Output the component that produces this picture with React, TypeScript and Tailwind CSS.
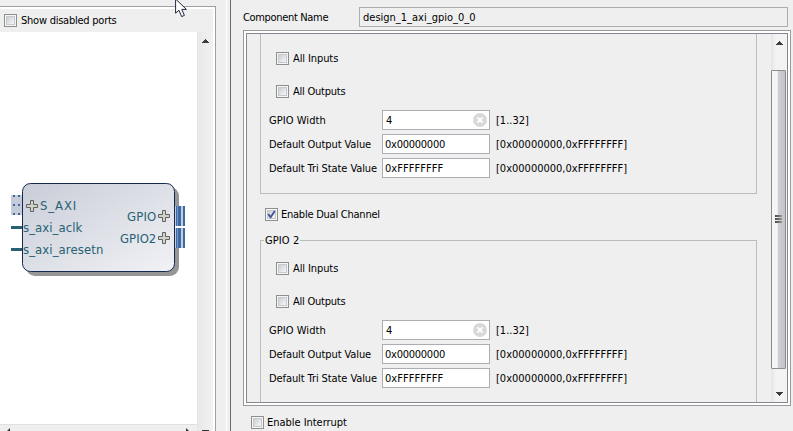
import React from "react";

function CheckBox({ label, checked = false, tight = false, spacing = "tracking-[-0.24px]" }: { label: string; checked?: boolean; tight?: boolean; spacing?: string }) {
  return (
    <label className={"flex h-[13px] items-center " + (tight ? "gap-[3px]" : "gap-[4px]")}>
      <span className="flex size-[13px] shrink-0 items-center justify-center border border-[#8e8f8f] bg-[#f6f6f6]">
        <span className="flex size-[9px] items-center justify-center border border-[#c4c9ce] bg-linear-to-br from-[#cbd0d6] to-[#f6f6f6]">
          {checked && (
            <svg width="9" height="9" viewBox="0 0 9 9" className="shrink-0">
              <path d="M1.2 4.2 3.6 7.2 7.8 1" fill="none" stroke="#42539a" strokeWidth="1.9" />
            </svg>
          )}
        </span>
      </span>
      <span className={"leading-[13px] " + spacing}>{label}</span>
    </label>
  );
}

function Field({ label, value, range, clear = false }: { label: string; value: string; range: string; clear?: boolean }) {
  return (
    <div className="flex h-[20px] items-center">
      <span className={"w-[113px] pt-[2px] " + (clear ? "tracking-[0.05px]" : "tracking-[-0.09px]")}>{label}</span>
      <span className={"flex h-[20px] w-[108px] items-center justify-between border border-[#abadb3] bg-white pr-[2px] " + (clear ? "pl-[3px]" : "pl-[2px]")}>
        <span className={"pt-[2px] " + (value.includes("F") ? "tracking-[0.05px]" : "tracking-[-0.25px]")}>{value}</span>
        {clear && (
          <svg width="14" height="14" viewBox="0 0 14 14">
            <circle cx="7" cy="7" r="7" fill="#d8d8d8" />
            <path d="M4.4 4.4 9.6 9.6M9.6 4.4 4.4 9.6" stroke="#fff" strokeWidth="1.9" />
          </svg>
        )}
      </span>
      <span className="pt-[2px] pl-[6px] tracking-[0px]">{range}</span>
    </div>
  );
}

function Channel() {
  return (
    <>
      <div className="flex flex-col gap-[20px] pl-[15px]">
        <CheckBox label="All Inputs" spacing="tracking-[-0.1px]" />
        <CheckBox label="All Outputs" />
      </div>
      <div className="mt-[12px] flex flex-col gap-[4px] pl-[8px]">
        <Field label="GPIO Width" value="4" range="[1..32]" clear />
        <Field label="Default Output Value" value="0x00000000" range="[0x00000000,0xFFFFFFFF]" />
        <Field label="Default Tri State Value" value="0xFFFFFFFF" range="[0x00000000,0xFFFFFFFF]" />
      </div>
    </>
  );
}

function Arrow({ down = false }: { down?: boolean }) {
  return (
    <svg width="7" height="4" viewBox="0 0 7 4" shapeRendering="crispEdges">
      <path d={down ? "M0 0H7L3.5 4Z" : "M0 4H7L3.5 0Z"} fill="#3c3c3c" />
    </svg>
  );
}

function Plus({ x, y }: { x: number; y: number }) {
  return (
    <path
      transform={`translate(${x} ${y})`}
      d="M4.5.5h3v4h4v3h-4v4h-3v-4h-4v-3h4z"
      fill="#d2d2cc"
      stroke="#62625c"
    />
  );
}

function Diagram() {
  return (
    <svg width="197" height="392" viewBox="0 32 197 392" className="block">
      <defs>
        <linearGradient id="block" x1="0" y1="0" x2="1" y2="1">
          <stop offset="0" stopColor="#c9cdd7" />
          <stop offset="1" stopColor="#f1f2f6" />
        </linearGradient>
      </defs>
      <rect x="26" y="187" width="153" height="89" rx="9" fill="#969696" />
      <rect x="11" y="195" width="11" height="20" fill="#c5cbd8" />
      <g fill="#3d69a6">
        {[195, 204, 213].map((y) => (
          <React.Fragment key={y}>
            <rect x="13" y={y} width="2" height="2" />
            <rect x="18" y={y} width="2" height="2" />
          </React.Fragment>
        ))}
      </g>
      <rect x="11" y="226" width="12" height="3" fill="#286174" />
      <rect x="11" y="248" width="12" height="3" fill="#286174" />
      <rect x="22.5" y="183.5" width="152" height="88" rx="8" fill="url(#block)" stroke="#15294f" />
      {[206, 228].map((y) => (
        <g key={y}>
          <rect x="175" y={y} width="10" height="20" fill="#3d69a6" />
          <rect x="175" y={y} width="1" height="20" fill="#c5cbd8" />
          <rect x="177" y={y} width="1" height="20" fill="#7798c6" />
          <rect x="181" y={y} width="2" height="20" fill="#c5cbd8" />
        </g>
      ))}
      <rect x="175" y="226" width="10" height="2" fill="#fff" />
      <Plus x={26} y={200} />
      <Plus x={158} y={210} />
      <Plus x={158} y={232} />
      <g fill="#286174" fontFamily="'DejaVu Sans Condensed','DejaVu Sans',sans-serif" fontSize="13">
        <text x="40" y="210" textLength="36">S_AXI</text>
        <text x="23" y="232" textLength="59">s_axi_aclk</text>
        <text x="23" y="254" textLength="80">s_axi_aresetn</text>
        <text x="127" y="221" textLength="29">GPIO</text>
        <text x="120" y="243" textLength="36">GPIO2</text>
      </g>
    </svg>
  );
}

export default function App() {
  return (
    <div className="relative flex h-[431px] w-[793px] overflow-hidden bg-[#efefef] font-['DejaVu_Sans_Condensed','DejaVu_Sans',sans-serif] text-[11px] tracking-[-0.3px] whitespace-nowrap text-black">
      <div className="flex w-[226px] flex-col pt-[6px]">
        <div className="flex w-[216px] grow flex-col border-t border-r border-[#a0a0a0]">
          <div className="flex grow flex-col border-t-2 border-r-2 border-white">
            <div className="flex h-[23px] items-center pb-[1px] pl-[4px]">
              <CheckBox label="Show disabled ports" />
            </div>
            <div className="flex grow">
              <div className="w-[197px] bg-white">
                <Diagram />
                <div className="flex h-[7px] justify-between border-t border-[#e0e0e0] bg-[#efefef] pt-[3px] pr-[7px] pl-[6px]">
                  <svg width="4" height="4"><path d="M4 0V4H0Z" fill="#333" /></svg>
                  <svg width="4" height="4"><path d="M0 0V4H4Z" fill="#333" /></svg>
                </div>
              </div>
              <div className="flex grow flex-col items-center justify-between border-l border-[#e6e6e6] bg-linear-to-r from-[#e9e9e9] to-[#f1f1f1] pt-[7px]">
                <Arrow />
                <span className="h-[1px] w-[7px] bg-[#333]" />
              </div>
            </div>
          </div>
        </div>
      </div>
      <div className="w-[4px] border-l border-white" />
      <div className="flex grow flex-col border-l border-[#6c6c6c] pt-[7px] pl-[12px]">
        <div className="flex h-[20px] items-center">
          <span className="w-[116px] pt-[2px] tracking-[-0.33px]">Component Name</span>
          <span className="flex h-[20px] w-[429px] items-center border border-[#abadb3] pt-[2px] pl-[3px] tracking-[0px]">design_1_axi_gpio_0_0</span>
        </div>
        <div className="mt-[3px] h-[376px] w-[548px] border border-[#999] bg-white p-[2px]">
          <div className="flex h-[370px] w-[542px] overflow-hidden border border-[#828790] bg-[#efefef]">
            <div className="w-[524px] pl-[13px]">
              <div className="h-[160px] w-[497px] border-x border-b border-[#bcbcbc] pt-[18px]">
                <Channel />
              </div>
              <div className="pt-[14px] pl-[5px]">
                <CheckBox label="Enable Dual Channel" checked tight />
              </div>
              <div className="mt-[19px] h-[180px] w-[497px] border-x border-t border-[#bcbcbc]">
                <div className="-mt-[7px] flex h-[14px] pl-[3px]">
                  <span className="bg-[#efefef] pr-[1px] pl-[1px] leading-[14px] tracking-[0.1px]">GPIO 2</span>
                </div>
                <div className="pt-[14px]">
                  <Channel />
                </div>
              </div>
            </div>
            <div className="flex w-[16px] flex-col items-center bg-linear-to-r from-[#e4e4e4] to-[#f3f3f3] to-30% pt-[7px]">
              <Arrow />
              <div className="mt-[25px] flex h-[299px] w-[15px] flex-col items-center justify-center gap-[1px] self-start rounded-[1px] border border-[#8c8c8c] bg-linear-to-r from-[#f5f5f5] from-40% via-[#cfcfd2] via-50% to-[#c2c2c8] pb-[1px]">
                <span className="h-[2px] w-[7px] bg-linear-to-r from-[#444] to-[#999]" />
                <span className="h-[2px] w-[7px] bg-linear-to-r from-[#444] to-[#999]" />
                <span className="h-[2px] w-[7px] bg-linear-to-r from-[#444] to-[#999]" />
              </div>
              <div className="mt-[23px] flex"><Arrow down /></div>
            </div>
          </div>
        </div>
        <div className="pt-[10px] pl-[8px]">
          <CheckBox label="Enable Interrupt" tight spacing="tracking-[-0.03px]" />
        </div>
      </div>
      <svg width="13" height="19" viewBox="0 0 13 19" className="absolute top-[-1px] left-[175px]">
        <path d="M.6 0V14.2L4 11.2 6.6 17.6 9.4 16.4 6.8 10.4H11.4Z" fill="#fff" stroke="#22263a" strokeWidth="1" />
      </svg>
    </div>
  );
}
